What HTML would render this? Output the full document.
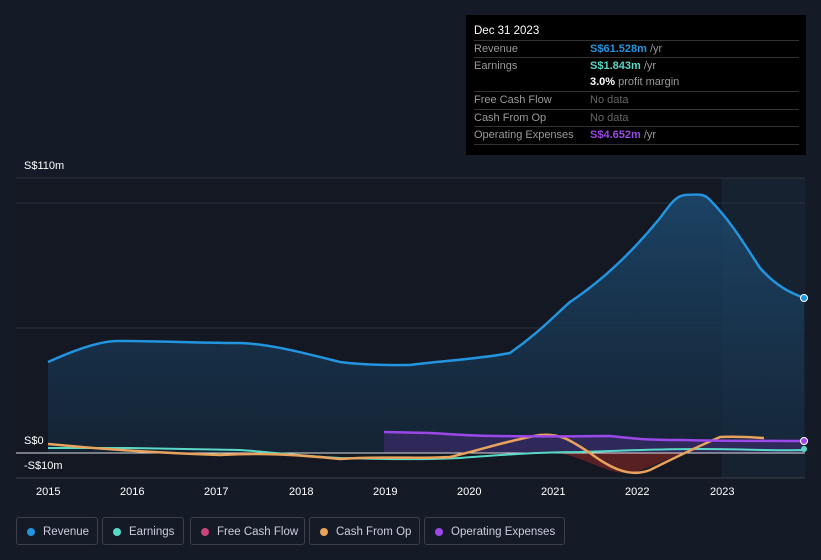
<!DOCTYPE html>
<html><head><meta charset="utf-8"><style>
body{margin:0;width:821px;height:560px;background:#151b26;font-family:"Liberation Sans",sans-serif;overflow:hidden;position:relative}
.tt{position:absolute;left:466px;top:15px;width:340px;height:140px;background:#000;color:#999;font-size:11px}
.tt .h{position:absolute;left:8px;top:10px;color:#fff;font-size:11.5px}
.row{position:absolute;left:8px;width:325px;border-top:1px solid #333;height:17px;line-height:17px}
.row span{position:absolute;left:116px}
.leg{position:absolute;top:517px;height:28px;border:1px solid #3a3f4a;border-radius:3px;color:#ccd;font-size:11.5px;line-height:28px;box-sizing:border-box;padding-left:26px}
.leg i{position:absolute;left:10px;top:10px;width:8px;height:8px;border-radius:50%}
.ax{position:absolute;color:#fff;font-size:11px}
</style></head><body>
<svg width="821" height="560" style="position:absolute;left:0;top:0">
<defs><linearGradient id="rg" x1="0" y1="0" x2="0" y2="1"><stop offset="0" stop-color="#1d4a70" stop-opacity=".85"/><stop offset="1" stop-color="#15283c" stop-opacity=".7"/></linearGradient></defs>
<rect x="16" y="178" width="789" height="300" fill="#131822"/>
<rect x="722" y="178" width="83" height="300" fill="#1a2a3a" opacity=".6"/>
<line x1="16" y1="178" x2="805" y2="178" stroke="#2e3440"/>
<line x1="16" y1="203" x2="805" y2="203" stroke="#2a303c"/>
<line x1="16" y1="328" x2="805" y2="328" stroke="#2a303c"/>
<path d="M48,362 C70,352 100,340 120,341 C160,341 200,343 240,343 C270,344 300,352 340,362 C370,366 400,365 410,365 C440,361 480,359 510,353 C540,332 555,315 570,302 C600,282 630,255 660,218 C670,205 675,196 685,195 C700,194 705,194 710,200 C730,220 745,245 760,268 C780,290 795,294 804,298 L804,453 L48,453Z" fill="url(#rg)"/>
<path d="M48,362 C70,352 100,340 120,341 C160,341 200,343 240,343 C270,344 300,352 340,362 C370,366 400,365 410,365 C440,361 480,359 510,353 C540,332 555,315 570,302 C600,282 630,255 660,218 C670,205 675,196 685,195 C700,194 705,194 710,200 C730,220 745,245 760,268 C780,290 795,294 804,298" fill="none" stroke="#2394df" stroke-width="2.5"/>
<path d="M384,432 L460,434 L540,437 L610,436 L640,440 L720,441 L804,441 L804,453 L384,453Z" fill="#3b2b6a" opacity=".7"/>
<path d="M560,453 C590,460 610,475 630,473 C650,470 680,450 690,453Z" fill="#6b2326" opacity=".8"/>
<line x1="16" y1="453" x2="805" y2="453" stroke="#ddd" stroke-width="1"/>
<path d="M48,448 L130,448 L240,450 C270,452 300,456 340,458 C380,459 420,460 460,458 C500,455 540,452 580,452 C620,451 650,449 700,449 C740,449 780,451 804,450" fill="none" stroke="#5ad8c6" stroke-width="2"/>
<path d="M48,444 C100,449 160,453 220,455 C260,453 290,454 340,459 C380,456 420,459 450,457 C480,450 510,440 540,435 C560,433 570,440 590,453 C610,468 630,478 650,470 C670,460 690,450 720,437 C740,436 760,438 764,438" fill="none" stroke="#e8a45c" stroke-width="2.5"/>
<path d="M384,432 L430,433 C450,434 470,436 500,436 C540,437 580,436 610,436 C630,438 640,440 680,440 C720,441 760,441 804,441" fill="none" stroke="#9b48e8" stroke-width="2.5"/>
<circle cx="804" cy="298" r="3.5" fill="#2394df" stroke="#fff"/>
<circle cx="804" cy="441" r="3.5" fill="#9b48e8" stroke="#fff"/>
<circle cx="804" cy="449" r="3" fill="#5ad8c6"/>
<line x1="16" y1="478" x2="805" y2="478" stroke="#3a404c"/>
</svg>
<div class="ax" style="left:24px;top:160px">S$110m</div>
<div class="ax" style="left:24px;top:435px">S$0</div>
<div class="ax" style="left:24px;top:460px">-S$10m</div>
<div class="ax" style="left:36px;top:486px">2015</div>
<div class="ax" style="left:120px;top:486px">2016</div>
<div class="ax" style="left:204px;top:486px">2017</div>
<div class="ax" style="left:289px;top:486px">2018</div>
<div class="ax" style="left:373px;top:486px">2019</div>
<div class="ax" style="left:457px;top:486px">2020</div>
<div class="ax" style="left:541px;top:486px">2021</div>
<div class="ax" style="left:625px;top:486px">2022</div>
<div class="ax" style="left:710px;top:486px">2023</div>
<div class="tt">
<div class="h">Dec 31 2023</div>
<div class="row" style="top:25px">Revenue<span><b style="color:#2394df">S$61.528m</b> /yr</span></div>
<div class="row" style="top:42px">Earnings<span><b style="color:#5ad8c6">S$1.843m</b> /yr</span></div>
<div class="row" style="top:59px;border-top:none"><span><b style="color:#fff">3.0%</b> profit margin</span></div>
<div class="row" style="top:76px">Free Cash Flow<span style="color:#666">No data</span></div>
<div class="row" style="top:94px">Cash From Op<span style="color:#666">No data</span></div>
<div class="row" style="top:111px">Operating Expenses<span><b style="color:#9b48e8">S$4.652m</b> /yr</span></div>
<div class="row" style="top:129px"></div>
</div>
<div class="leg" style="left:16px;width:82px"><i style="background:#2394df"></i>Revenue</div>
<div class="leg" style="left:102px;width:82px"><i style="background:#5ad8c6"></i>Earnings</div>
<div class="leg" style="left:190px;width:115px"><i style="background:#c8457a"></i>Free Cash Flow</div>
<div class="leg" style="left:309px;width:111px"><i style="background:#e8a45c"></i>Cash From Op</div>
<div class="leg" style="left:424px;width:141px"><i style="background:#9b48e8"></i>Operating Expenses</div>
</body></html>
